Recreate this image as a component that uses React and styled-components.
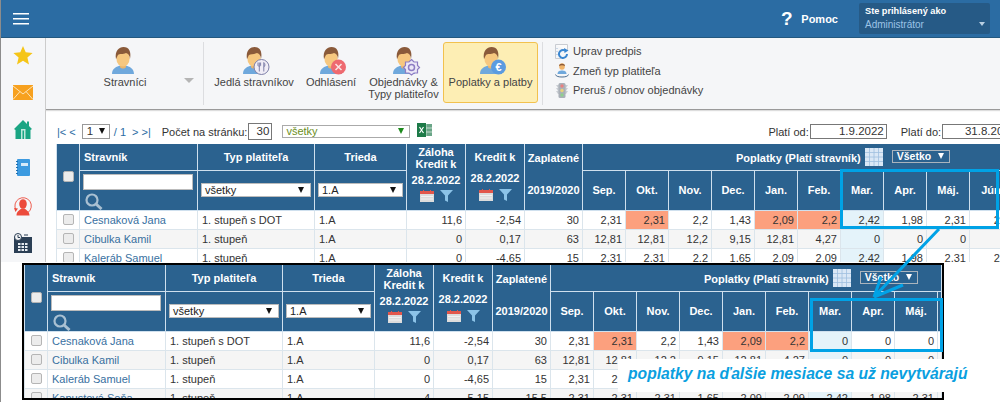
import React from "react";
import styled, { createGlobalStyle } from "styled-components";

const BLUE = "#00a2e6";

const GlobalStyle = createGlobalStyle`
  html, body { margin: 0; padding: 0; background: #fff; }
  body { font-family: "Liberation Sans", Arial, sans-serif; color: #333; }
`;

const Page = styled.div`
  position: relative;
  width: 1000px;
  height: 402px;
  overflow: hidden;
  background: #fff;
  border-left: 1px solid #8c8c8c;
  box-sizing: border-box;
`;

const MainPanel = styled.div`
  height: 262px;
  overflow: hidden;
`;

const TopBar = styled.header`
  height: 37px;
  display: flex;
  align-items: center;
  background: #2b6ca3;
  border-bottom: 1px solid #23587f;
  padding: 0 10px 0 12px;
  box-sizing: content-box;
`;

const Burger = styled.div`
  width: 16px;
  display: flex;
  flex-direction: column;
  gap: 4px;
  & > span { display: block; height: 1px; background: #fff; box-shadow: 0 0.5px 0 #fff; }
`;

const Help = styled.div`
  margin-left: auto;
  display: flex;
  align-items: center;
  color: #fff;
  font-weight: bold;
  font-size: 11px;
`;

const HelpMark = styled.span`
  font-size: 19px;
  width: 19px;
  text-align: center;
  margin-right: 5px;
`;

const Account = styled.div`
  position: relative;
  width: 131px;
  height: 31px;
  margin-left: 21px;
  padding: 1px 6px;
  box-sizing: border-box;
  background: #265a86;
  border-radius: 2px;
  font-size: 9.2px;
  line-height: 14px;
  color: #fff;
`;

const AccountName = styled.div`
  color: #9cc3e6;
  font-size: 10px;
`;

const AccountCaret = styled.span`
  position: absolute;
  right: 5px;
  bottom: 8px;
  border: 3.5px solid transparent;
  border-top: 4px solid #b9cfe2;
  border-bottom: 0;
`;

const Body = styled.div`
  display: flex;
`;

const Sidebar = styled.nav`
  width: 44px;
  height: 224px;
  flex: none;
  display: flex;
  flex-direction: column;
  align-items: center;
  background: #f5f6f8;
  border-right: 1px solid #c9c9c9;
  padding-top: 8px;
  gap: 20px;
`;

const SideIcon = styled.svg`
  display: block;
  flex: none;
  margin-top: ${(p) => p.$mt || 0}px;
`;

const Content = styled.main`
  flex: 1;
  min-width: 0;
`;

const Ribbon = styled.section`
  height: 72px;
  display: flex;
  background: #f5f6f8;
  border-bottom: 1px solid #9a9a9a;
  padding-top: 4px;
  box-sizing: border-box;
  box-shadow: 0 1px 1px #ddd;
`;

const RibbonGroup = styled.div`
  height: 63px;
  display: flex;
  flex: none;
  width: ${(p) => p.$w}px;
  border-right: 1px solid #dcdde0;
  box-sizing: border-box;
`;

const MemberGroup = styled(RibbonGroup)`
  padding-left: 57px;
  align-items: flex-start;
`;

const ActionGroup = styled(RibbonGroup)`
  padding-left: 11px;
  gap: 13px;
`;

const RibbonButton = styled.button`
  flex: none;
  width: ${(p) => p.$w}px;
  height: 61px;
  margin: 0 0 0 ${(p) => p.$ml || 0}px;
  padding: 4px 0 0;
  display: flex;
  flex-direction: column;
  align-items: center;
  gap: 1px;
  background: ${(p) => (p.$active ? "#fdeeb4" : "transparent")};
  border: 1px solid ${(p) => (p.$active ? "#f2c14e" : "transparent")};
  border-radius: 3px;
  box-sizing: border-box;
  font: 11px/12px "Liberation Sans", Arial, sans-serif;
  color: #444;
  white-space: nowrap;
`;

const PersonSvg = styled.svg`
  flex: none;
  overflow: visible;
  margin-left: ${(p) => (p.$badged ? 5 : 0)}px;
`;

const GroupCaret = styled.span`
  margin: 36px 0 0 37px;
  border: 5px solid transparent;
  border-top: 5px solid #b5b5b5;
  border-bottom: 0;
`;

const SideLinks = styled.ul`
  list-style: none;
  margin: 0;
  padding: 1px 0 0 12px;
  display: flex;
  flex-direction: column;
  gap: 3px;
`;

const SideLink = styled.li`
  height: 16.5px;
  display: flex;
  align-items: center;
  gap: 4px;
  font-size: 11px;
  color: #444;
`;

const Toolbar = styled.div`
  height: 34px;
  display: flex;
  align-items: center;
  padding: 9px 0 0 11px;
  box-sizing: border-box;
  font-size: 11px;
  white-space: nowrap;
  color: #333;
  & > * { flex: none; }
`;

const PagerLink = styled.span`
  color: #2b6ca3;
  margin: 0 ${(p) => p.$mr || 0}px 0 ${(p) => p.$ml || 0}px;
`;

const PageSelect = styled.div`
  position: relative;
  width: 28px;
  height: 15px;
  margin-left: 6px;
  border: 1px solid #999;
  box-sizing: border-box;
  padding-left: 4px;
  font-size: 11.5px;
  line-height: 13px;
  &::after {
    content: "";
    position: absolute;
    right: 4px;
    top: 3px;
    border: 3.5px solid transparent;
    border-top: 6px solid #111;
    border-bottom: 0;
  }
`;

const FieldLabel = styled.span`
  margin-left: ${(p) => p.$ml}px;
`;

const BoxInput = styled.div`
  width: ${(p) => p.$w}px;
  height: ${(p) => p.$h || 15}px;
  margin-left: 1px;
  border: 1px solid #777;
  box-sizing: border-box;
  padding-right: 2px;
  text-align: right;
  background: #fff;
  font-size: 11.5px;
  line-height: ${(p) => (p.$h || 15) - 2}px;
`;

const GreenSelect = styled.div`
  position: relative;
  width: 128px;
  height: 13px;
  margin: 0 0 1px 10px;
  border: 1px solid #aaa;
  box-sizing: border-box;
  padding-left: 3px;
  color: #6b8e23;
  font-size: 11px;
  line-height: 11px;
  &::after {
    content: "";
    position: absolute;
    right: 5px;
    top: 2px;
    border: 3px solid transparent;
    border-top: 6px solid #1d8a1d;
    border-bottom: 0;
  }
`;

const TableWrap = styled.div`
  margin-left: ${(p) => p.$ml || 0}px;
`;

const Grid = styled.table`
  table-layout: fixed;
  width: ${(p) => p.$w}px;
  border-collapse: collapse;
  font-size: 11px;
  color: #333;
`;

const Col = styled.col`
  width: ${(p) => p.$w}px;
`;

const HeadRow = styled.tr`
  height: ${(p) => p.$h}px;
`;

const BodyRow = styled.tr`
  height: 19px;
  background: ${(p) => (p.$alt ? "#f5f5f5" : "#fff")};
`;

const Th = styled.th`
  padding: 0;
  background: #2b628f;
  color: #fff;
  border: 1px solid #cfe0ee;
  border-top: 0;
  font-size: 11px;
  font-weight: bold;
  line-height: 12px;
  text-align: center;
  vertical-align: middle;
  overflow: hidden;
`;

const NameHead = styled(Th)`
  text-align: left;
  padding: 1px 0 0 4px;
`;

const TitleHead = styled(Th)`
  padding-top: 1px;
`;

const FilterCell = styled(Th)`
  padding: 3px 3px 0 3px;
  vertical-align: top;
  text-align: left;
`;

const SelectCell = styled(Th)`
  padding: 12px 3px 0 3px;
  vertical-align: top;
`;

const StackHead = styled(Th)`
  vertical-align: top;
`;

const HeadLine = styled.div`
  margin-top: ${(p) => p.$mt || 0}px;
  white-space: nowrap;
`;

const IconPair = styled.div`
  display: flex;
  justify-content: center;
  gap: 6px;
  margin-top: ${(p) => p.$mt || 0}px;
`;

const FeesHead = styled.div`
  display: flex;
  align-items: center;
  padding: 3px 0 0 153px;
  white-space: nowrap;
  font-size: 11px;
`;

const FeeSelect = styled.div`
  position: relative;
  width: 58px;
  height: 13px;
  flex: none;
  margin: -4px 0 0 9px;
  border: 1px solid #aab4bd;
  box-sizing: border-box;
  padding-left: 4px;
  text-align: left;
  font-size: 10.5px;
  line-height: 11px;
  &::after {
    content: "";
    position: absolute;
    right: 5px;
    top: 2px;
    border: 3.5px solid transparent;
    border-top: 6px solid #fff;
    border-bottom: 0;
  }
`;

const NameInput = styled.div`
  height: 16px;
  width: 110px;
  background: #fff;
  border: 1px solid #bbb;
  box-sizing: border-box;
`;

const HeadSelect = styled.div`
  position: relative;
  height: 14px;
  background: #fff;
  border: 1px solid #bbb;
  box-sizing: border-box;
  padding-left: 3px;
  color: #222;
  font-size: 11px;
  font-weight: normal;
  line-height: 12px;
  text-align: left;
  &::after {
    content: "";
    position: absolute;
    right: 6px;
    top: 3px;
    border: 3.5px solid transparent;
    border-top: 6px solid #111;
    border-bottom: 0;
  }
`;

const Td = styled.td`
  padding: 0 4px;
  border: 1px solid #dbe5ec;
  white-space: nowrap;
  overflow: hidden;
  text-align: ${(p) => p.$align || "left"};
  color: #333;
`;

const NameCell = styled(Td)`
  color: #38709f;
`;

const CheckCell = styled(Td)`
  padding: 0;
  text-align: center;
`;

const NumCell = styled(Td)`
  padding: 0 3px;
  text-align: right;
  background: ${(p) => (p.$tone === "late" ? "#fca07e" : p.$tone === "next" ? "#e4f3fa" : "transparent")};
`;

const Check = styled.input.attrs({ type: "checkbox" })`
  appearance: none;
  display: block;
  width: 11px;
  height: 11px;
  margin: 0 auto;
  background: #ececec;
  border: 1px solid #b5b5b5;
  border-radius: 2px;
`;

const Frame = styled.div`
  position: absolute;
  left: 21px;
  top: 263px;
  width: 922px;
  height: 137px;
  box-sizing: border-box;
  overflow: hidden;
  background: #fff;
  border: 2px solid #000;
`;

const Callout = styled.div`
  position: absolute;
  border: 3px solid ${BLUE};
  box-sizing: border-box;
`;

const TopCallout = styled(Callout)`
  left: 839px;
  top: 169px;
  width: 159px;
  height: 60px;
`;

const FrameCallout = styled(Callout)`
  left: 809px;
  top: 298px;
  width: 133px;
  height: 54px;
`;

const ArrowSvg = styled.svg`
  position: absolute;
  left: 860px;
  top: 225px;
`;

const Note = styled.div`
  position: absolute;
  left: 617px;
  top: 359px;
  width: 355px;
  height: 33px;
  padding-left: 10px;
  box-sizing: border-box;
  background: #fff;
  color: #0a9fe0;
  font-size: 15.7px;
  font-weight: bold;
  font-style: italic;
  line-height: 30px;
  white-space: nowrap;
`;

const Person = () => (
  <>
    <path d="M0 27C0 21 5 19.5 8 18.5L14 18.5C17 19.5 22 21 22 27Z" fill="#6fa8dc" />
    <path d="M8 15H14V20C13 22 9 22 8 20Z" fill="#eab56c" />
    <ellipse cx="11" cy="11.5" rx="6.6" ry="8" fill="#f6c77f" />
    <path d="M4 12C2.5 4 7 0 11.5 0C17 0 19.5 4.500 18 12C17.800 8.500 16.500 7 14 6C11 7.500 7.500 6.500 6 8C5 9 5 11 4 12Z" fill="#8a5a3a" />
  </>
);

const PersonIcon = ({ children }) => (
  <PersonSvg width="27" height="28" viewBox="0 0 27 28" $badged={!!children}>
    <Person />
    {children}
  </PersonSvg>
);

const MealBadge = () => (
  <g>
    <circle cx="18.500" cy="20" r="7.500" fill="#f0edf6" stroke="#7d7fa8" />
    <path d="M16.300 15.500V24.500M15 15.500V18.500C15 19.500 17.600 19.500 17.600 18.500V15.500M20.800 24.500V15.500C22.300 16.500 22.300 19.500 20.800 20" stroke="#7d7fa8" fill="none" strokeWidth="1" />
  </g>
);

const CancelBadge = () => (
  <g>
    <circle cx="18.500" cy="20" r="7.500" fill="#ee6a70" />
    <path d="M15.500 17L21.500 23M21.500 17L15.500 23" stroke="#fbe3e3" strokeWidth="1.500" />
  </g>
);

const GearBadge = () => (
  <g fill="none" stroke="#8d7cc3">
    <path d="M18.500 12.500L21 15L24.500 15L24.500 18.500L26.500 20.500L24.500 22.500L24.500 26L21 26L18.500 28L16 26L12.500 26L12.500 22.500L10.500 20.500L12.500 18.500L12.500 15L16 15Z" fill="#ece8f7" strokeWidth="1.200" />
    <circle cx="18.500" cy="20.500" r="3" strokeWidth="1.500" />
  </g>
);

const EuroBadge = () => (
  <g>
    <circle cx="18.500" cy="20" r="7.500" fill="#5b9be0" />
    <text x="18.500" y="24" textAnchor="middle" fontSize="11" fontWeight="bold" fill="#fff" fontFamily="Liberation Sans">€</text>
  </g>
);

const StarIcon = () => (
  <SideIcon width="20" height="19" viewBox="0 0 20 19">
    <path d="M10 0L12.700 6.300L19.600 7L14.400 11.500L16 18.400L10 14.800L4 18.400L5.600 11.500L.4 7L7.300 6.300Z" fill="#f5c518" />
  </SideIcon>
);

const MailIcon = () => (
  <SideIcon width="20" height="15" viewBox="0 0 20 15">
    <rect width="20" height="15" fill="#f7a11f" />
    <path d="M0 1L10 9L20 1M0 14.500L7 6.500M20 14.500L13 6.500" stroke="#fde3b5" fill="none" strokeWidth="1" />
  </SideIcon>
);

const HomeIcon = () => (
  <SideIcon width="18" height="19" viewBox="0 0 18 19">
    <path d="M0 9L9 0L13 4V1.500H15V6L18 9L16.500 10V19H1.500V10Z" fill="#1aa583" />
    <path d="M7 9H11.500V19H10V10.500H8.500V19H7Z" fill="#bfe8dc" />
  </SideIcon>
);

const NoteIcon = () => (
  <SideIcon width="14" height="17" viewBox="0 0 14 17">
    <rect x="1" width="13" height="17" rx="1" fill="#3c9ae0" />
    <path d="M5 4H12V7H5Z" fill="#d5eafa" />
    <path d="M0 2.500H2M0 5.500H2M0 8.500H2M0 11.500H2M0 14.500H2" stroke="#1f6fae" />
  </SideIcon>
);

const ReloadPersonIcon = () => (
  <SideIcon width="18" height="20" viewBox="0 0 18 20">
    <path d="M2 14A8.200 8.200 0 1 1 14 16.500" fill="none" stroke="#ec4b3c" strokeWidth="0.900" />
    <path d="M0 12L4 12.500L1.500 16Z" fill="#ec4b3c" />
    <ellipse cx="9" cy="8" rx="3.800" ry="4.800" fill="#ec4b3c" />
    <path d="M2.500 19.500C2.500 15 6 14 7.500 12.500H10.500C12 14 15.500 15 15.500 19.500Z" fill="#ec4b3c" />
  </SideIcon>
);

const CalendarIcon = () => (
  <SideIcon width="18" height="20" viewBox="0 0 18 20" $mt={-3}>
    <rect y="4" width="18" height="16" fill="#2b3f55" />
    <circle cx="4" cy="4" r="3.500" fill="#f4f5f7" stroke="#2b3f55" />
    <path d="M4 2V4.500H6M11 1V3M13 1V3" stroke="#2b3f55" fill="none" />
    <path d="M4 10h2.500v2H4zM7.500 10H10v2H7.500zM11 10h2.500v2H11zM4 13h2.500v2H4zM7.500 13H10v2H7.500zM11 13h2.500v2H11zM4 16h2.500v2H4zM7.500 16H10v2H7.500zM11 16h2.500v2H11z" fill="#e8edf2" />
  </SideIcon>
);

const ExcelSvg = styled.svg`
  margin: 0 0 3px 7px;
`;

const ExcelIcon = () => (
  <ExcelSvg width="15" height="14" viewBox="0 0 15 14">
    <rect x="5" y="1" width="10" height="12" fill="#6aa587" />
    <path d="M9 1V13M5 5H15M5 9H15" stroke="#d6e8dd" strokeWidth="0.800" />
    <rect y="0" width="9" height="14" fill="#1d7a48" />
    <path d="M2.500 4L6.500 10M6.500 4L2.500 10" stroke="#fff" strokeWidth="1.200" />
  </ExcelSvg>
);

const DocRefresh = () => (
  <svg width="14" height="15" viewBox="0 0 14 15">
    <path d="M.5.5H12.500V7" fill="#fbfbfb" stroke="#c9ccd2" />
    <path d="M.5.5V14.500H6" fill="none" stroke="#c9ccd2" />
    <path d="M2 4V5M2 7V8M2 10V11" stroke="#9db8d6" />
    <path d="M12 10A4 4 0 1 1 10 6.500" fill="none" stroke="#3a86d0" strokeWidth="2" />
    <path d="M9 4L13.500 6.500L9.500 9Z" fill="#3a86d0" />
  </svg>
);

const SwapPerson = () => (
  <svg width="14" height="15" viewBox="0 0 14 15">
    <ellipse cx="7" cy="3.500" rx="2.800" ry="3.300" fill="#f0b46a" />
    <path d="M4 3C4 0 10 0 10 3C8 2 6 2 4 3Z" fill="#8a5a3a" />
    <path d="M2.500 11C2.500 8 5 7.500 7 7.500C9 7.500 11.500 8 11.500 11Z" fill="#6fa8dc" />
    <path d="M0.500 11.500C1 13.500 4 14 7 14C10 14 13 13.500 13.500 11.500" fill="none" stroke="#4c6d8f" />
  </svg>
);

const TrafficLight = () => (
  <svg width="14" height="15" viewBox="0 0 14 15">
    <path d="M1 2H13L11 5H13L11 8H13L11 11H3L1 8H3L1 5H3Z" fill="#c9cdd3" />
    <rect x="3.500" y="0" width="7" height="15" rx="1.500" fill="#aab0b8" />
    <circle cx="7" cy="3" r="1.700" fill="#e88080" />
    <circle cx="7" cy="7.500" r="1.700" fill="#e9d27a" />
    <circle cx="7" cy="12" r="1.700" fill="#8fcf8f" />
  </svg>
);

const SmallCalendar = () => (
  <svg width="14" height="12" viewBox="0 0 14 12">
    <rect y="2" width="14" height="10" fill="#dcdcdc" />
    <rect y="1" width="14" height="3" fill="#e2574c" />
    <path d="M3.500 0V2.500M10.500 0V2.500" stroke="#e2574c" />
    <path d="M1 6.500H13M1 9H13" stroke="#f2f2f2" />
  </svg>
);

const FilterIcon = () => (
  <svg width="13" height="12" viewBox="0 0 13 12">
    <path d="M0 0H13L8 5.500V12L5 10.500V5.500Z" fill="#8cc3e8" />
  </svg>
);

const MagnifierSvg = styled.svg`
  display: block;
  margin: 3px 0 0 2px;
`;

const MagnifierIcon = () => (
  <MagnifierSvg width="18" height="17" viewBox="0 0 18 17">
    <circle cx="7" cy="7" r="5.500" fill="none" stroke="#a9c0d2" strokeWidth="2.200" />
    <path d="M11 11L16.500 16" stroke="#a9c0d2" strokeWidth="3" />
  </MagnifierSvg>
);

const GridSvg = styled.svg`
  flex: none;
  margin: -3px 0 0 4px;
`;

const GridIcon = () => (
  <GridSvg width="18" height="18" viewBox="0 0 18 18">
    <rect width="18" height="18" fill="#dbe8f6" />
    <path d="M0 4.500H18M0 9H18M0 13.500H18M4.500 0V18M9 0V18M13.500 0V18" stroke="#9fbfdf" strokeWidth="0.800" />
  </GridSvg>
);

const MONTHS = ["Sep.", "Okt.", "Nov.", "Dec.", "Jan.", "Feb.", "Mar.", "Apr.", "Máj.", "Jún"];

const mainRows = [
  { name: "Cesnaková Jana", type: "1. stupeň s DOT", a: "11,6", k: "-2,54", z: "30", fees: ["2,31", "2,31", "2,2", "1,43", "2,09", "2,2", "2,42", "1,98", "2,31", "2,4"], late: [1, 4, 5] },
  { name: "Cibulka Kamil", type: "1. stupeň", a: "0", k: "0,17", z: "63", fees: ["12,81", "12,81", "12,2", "9,15", "12,81", "4,27", "0", "0", "0", ""], late: [] },
  { name: "Kaleráb Samuel", type: "1. stupeň", a: "0", k: "-4,65", z: "15", fees: ["2,31", "2,31", "2,2", "1,65", "2,09", "2,09", "2,42", "1,98", "2,31", "2,4"], late: [] },
];

const frameRows = [
  { name: "Cesnaková Jana", type: "1. stupeň s DOT", a: "11,6", k: "-2,54", z: "30", fees: ["2,31", "2,31", "2,2", "1,43", "2,09", "2,2", "0", "0", "0"], late: [1, 4, 5] },
  { name: "Cibulka Kamil", type: "1. stupeň", a: "0", k: "0,17", z: "63", fees: ["12,81", "12,81", "12,2", "9,15", "12,81", "4,27", "0", "0", "0"], late: [] },
  { name: "Kaleráb Samuel", type: "1. stupeň", a: "0", k: "-4,65", z: "15", fees: ["2,31", "2,31", "2,2", "1,65", "2,09", "2,09", "0", "0", "0"], late: [] },
  { name: "Kapustová Soňa", type: "1. stupeň", a: "4", k: "-5,15", z: "15,5", fees: ["2,31", "2,31", "2,31", "1,65", "2,09", "2,09", "2,42", "1,98", "2,31"], late: [] },
];

const FeeTable = ({ months, rows, tail }) => {
  const span = months.length + (tail ? 1 : 0);
  const width = 526 + months.length * 43 + (tail ? 4 : 0);
  return (
    <Grid $w={width}>
      <colgroup>
        {[23, 118, 117, 92, 59, 59, 58].map((w, i) => <Col key={i} $w={w} />)}
        {months.map((m) => <Col key={m} $w={43} />)}
        {tail && <Col $w={4} />}
      </colgroup>
      <thead>
        <HeadRow $h={26}>
          <Th rowSpan={2}><Check /></Th>
          <NameHead>Stravník</NameHead>
          <TitleHead>Typ platiteľa</TitleHead>
          <TitleHead>Trieda</TitleHead>
          <StackHead rowSpan={2}>
            <HeadLine $mt={2}>Záloha</HeadLine>
            <HeadLine>Kredit k</HeadLine>
            <HeadLine $mt={4}>28.2.2022</HeadLine>
            <IconPair $mt={4}><SmallCalendar /><FilterIcon /></IconPair>
          </StackHead>
          <StackHead rowSpan={2}>
            <HeadLine $mt={7}>Kredit k</HeadLine>
            <HeadLine $mt={9}>28.2.2022</HeadLine>
            <IconPair $mt={5}><SmallCalendar /><FilterIcon /></IconPair>
          </StackHead>
          <StackHead rowSpan={2}>
            <HeadLine $mt={8}>Zaplatené</HeadLine>
            <HeadLine $mt={20}>2019/2020</HeadLine>
          </StackHead>
          <Th colSpan={span}>
            <FeesHead>
              Poplatky (Platí stravník)
              <GridIcon />
              <FeeSelect>Všetko</FeeSelect>
            </FeesHead>
          </Th>
        </HeadRow>
        <HeadRow $h={38}>
          <FilterCell>
            <NameInput />
            <MagnifierIcon />
          </FilterCell>
          <SelectCell><HeadSelect>všetky</HeadSelect></SelectCell>
          <SelectCell><HeadSelect>1.A</HeadSelect></SelectCell>
          {months.map((m) => <Th key={m}>{m}</Th>)}
          {tail && <Th />}
        </HeadRow>
      </thead>
      <tbody>
        {rows.map((r, i) => (
          <BodyRow key={r.name} $alt={i % 2 === 1}>
            <CheckCell><Check /></CheckCell>
            <NameCell>{r.name}</NameCell>
            <Td>{r.type}</Td>
            <Td>1.A</Td>
            <NumCell>{r.a}</NumCell>
            <NumCell>{r.k}</NumCell>
            <NumCell>{r.z}</NumCell>
            {r.fees.map((f, j) => (
              <NumCell key={j} $tone={r.late.includes(j) ? "late" : j === 6 ? "next" : ""}>{f}</NumCell>
            ))}
            {tail && <Td />}
          </BodyRow>
        ))}
      </tbody>
    </Grid>
  );
};

export default function App() {
  return (
    <Page>
      <GlobalStyle />
      <MainPanel>
        <TopBar>
          <Burger><span /><span /><span /></Burger>
          <Help><HelpMark>?</HelpMark>Pomoc</Help>
          <Account>
            <b>Ste prihlásený ako</b>
            <AccountName>Administrátor</AccountName>
            <AccountCaret />
          </Account>
        </TopBar>
        <Body>
          <Sidebar>
            <StarIcon />
            <MailIcon />
            <HomeIcon />
            <NoteIcon />
            <ReloadPersonIcon />
            <CalendarIcon />
          </Sidebar>
          <Content>
            <Ribbon>
              <MemberGroup $w={158}>
                <RibbonButton $w={44}>
                  <PersonIcon />
                  <span>Stravníci</span>
                </RibbonButton>
                <GroupCaret />
              </MemberGroup>
              <ActionGroup $w={339}>
                <RibbonButton $w={78}><PersonIcon><MealBadge /></PersonIcon><span>Jedlá stravníkov</span></RibbonButton>
                <RibbonButton $w={50}><PersonIcon><CancelBadge /></PersonIcon><span>Odhlásení</span></RibbonButton>
                <RibbonButton $w={69}><PersonIcon><GearBadge /></PersonIcon><span>Objednávky &<br />Typy platiteľov</span></RibbonButton>
                <RibbonButton $w={95} $ml={-8} $active><PersonIcon><EuroBadge /></PersonIcon><span>Poplatky a platby</span></RibbonButton>
              </ActionGroup>
              <SideLinks>
                <SideLink><DocRefresh />Uprav predpis</SideLink>
                <SideLink><SwapPerson />Zmeň typ platiteľa</SideLink>
                <SideLink><TrafficLight />Preruš / obnov objednávky</SideLink>
              </SideLinks>
            </Ribbon>
            <Toolbar>
              <PagerLink>|&lt; &lt;</PagerLink>
              <PageSelect>1</PageSelect>
              <PagerLink $ml={4} $mr={6}>/ 1</PagerLink>
              <PagerLink>&gt; &gt;|</PagerLink>
              <FieldLabel $ml={11}>Počet na stránku:</FieldLabel>
              <BoxInput $w={24} $h={17}>30</BoxInput>
              <GreenSelect>všetky</GreenSelect>
              <ExcelIcon />
              <FieldLabel $ml={336}>Platí od:</FieldLabel>
              <BoxInput $w={77}>1.9.2022</BoxInput>
              <FieldLabel $ml={14}>Platí do:</FieldLabel>
              <BoxInput $w={77}>31.8.2023</BoxInput>
            </Toolbar>
            <TableWrap $ml={10}>
              <FeeTable months={MONTHS} rows={mainRows} />
            </TableWrap>
          </Content>
        </Body>
      </MainPanel>
      <Frame>
        <FeeTable months={MONTHS.slice(0, 9)} rows={frameRows} tail />
      </Frame>
      <TopCallout />
      <FrameCallout />
      <ArrowSvg width="90" height="80" viewBox="0 0 90 80">
        <path d="M78 4L13 72M13 72L20 52M13 72L42 60" fill="none" stroke={BLUE} strokeWidth="3" />
      </ArrowSvg>
      <Note>poplatky na ďalšie mesiace sa už nevytvárajú</Note>
    </Page>
  );
}
